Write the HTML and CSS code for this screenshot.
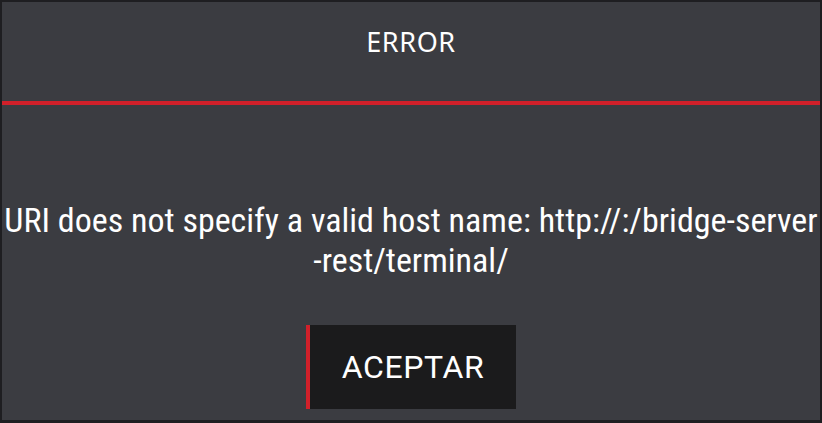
FILE: index.html
```html
<!DOCTYPE html>
<html lang="es">
<head>
	<meta charset="utf-8" />
	<title>Error</title>
	<link rel="stylesheet" href="styles.css">
</head>
<body>

<div class="dialog">
	<div class="dialog-title">ERROR</div>
	<div class="dialog-body">
		<p class="message">URI does not specify a valid host name: http://:/bridge-server<br>-rest/terminal/</p>
		<div class="actions">
			<button class="btn">ACEPTAR</button>
		</div>
	</div>
</div>

</body>
</html>
```

FILE: styles.css
```css
html,
body {
	margin: 0;
	padding: 0;
	background: #1d1d1f;
}
.dialog {
	box-sizing: border-box;
	width: 822px;
	height: 423px;
	border: 2px solid #1e1e21;
	border-bottom-width: 3px;
	background: #3b3c41;
	color: #ffffff;
	display: flex;
	flex-direction: column;
}
.dialog-title {
	height: 74px;
	padding-top: 25px;
	border-bottom: 4px solid #d1202a;
	text-align: center;
	font-family: 'Noto Sans', sans-serif;
	font-size: 27px;
	letter-spacing: 0.6px;
	line-height: 29px;
}
.dialog-body {
	flex: 1;
	display: flex;
	flex-direction: column;
	align-items: center;
}
.message {
	margin: 95px 0 0 0;
	text-align: center;
	font-family: 'Roboto', sans-serif;
	font-stretch: condensed;
	font-size: 34px;
	line-height: 40px;
	white-space: nowrap;
}
.actions {
	margin-top: 45px;
}
.btn {
	width: 210px;
	height: 84px;
	border: 0;
	border-left: 4px solid #d1202a;
	background: #1b1b1c;
	color: #ffffff;
	font-family: 'Roboto', sans-serif;
	font-size: 32px;
	letter-spacing: 0.6px;
	padding: 0;
}
```
